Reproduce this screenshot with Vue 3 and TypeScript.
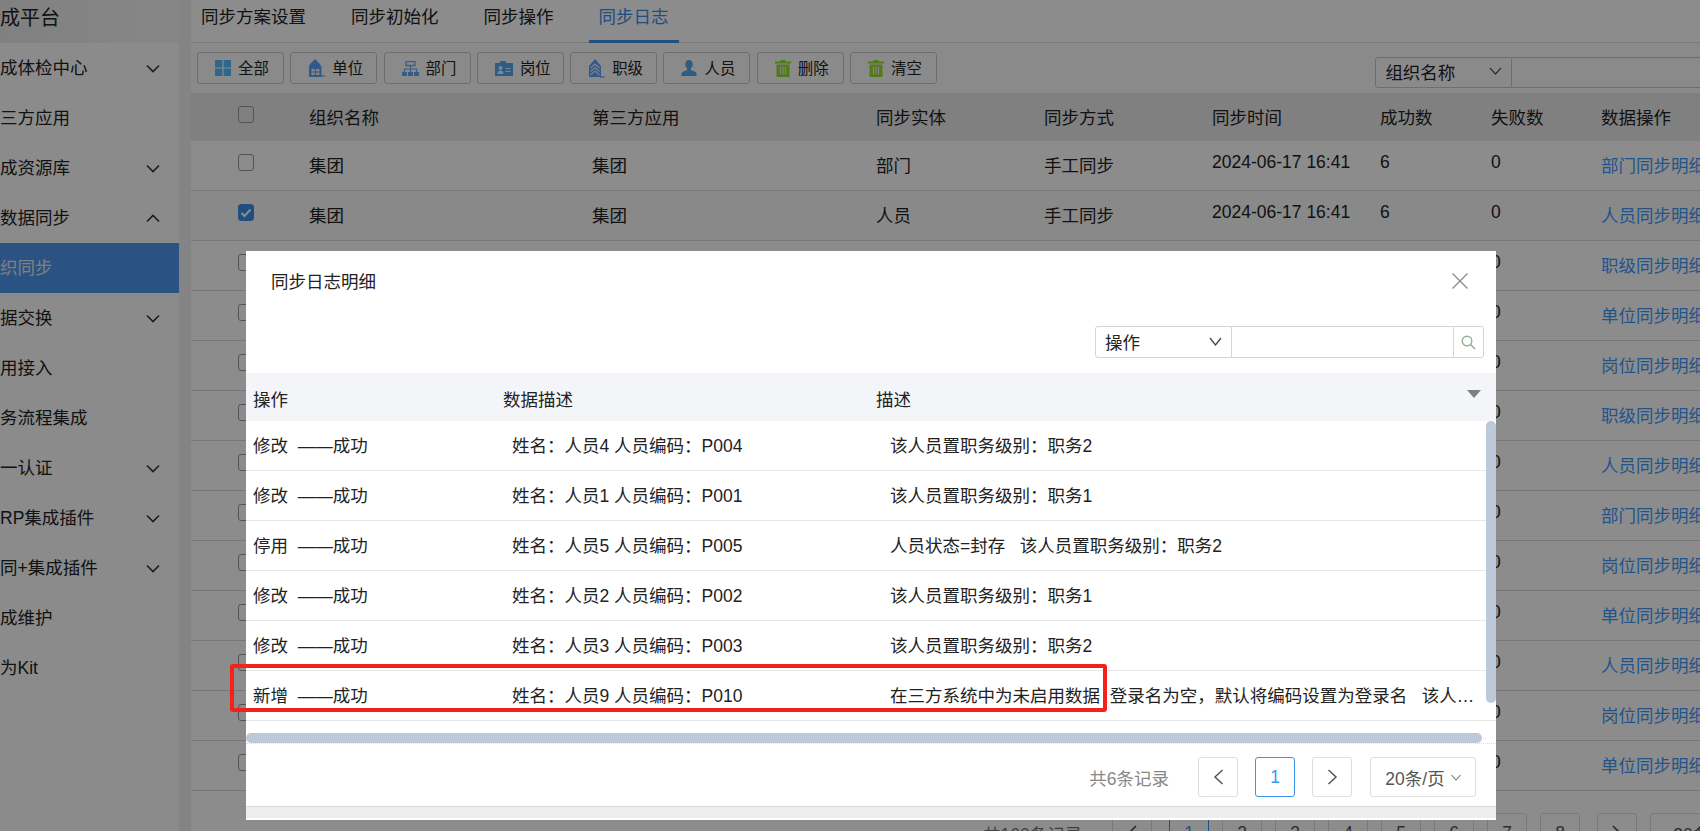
<script setup lang="ts">
const menu = [
  { label: "成体检中心", arrow: "down" },
  { label: "三方应用" },
  { label: "成资源库", arrow: "down" },
  { label: "数据同步", arrow: "up" },
  { label: "织同步", active: true },
  { label: "据交换", arrow: "down" },
  { label: "用接入" },
  { label: "务流程集成" },
  { label: "一认证", arrow: "down" },
  { label: "RP集成插件", arrow: "down" },
  { label: "同+集成插件", arrow: "down" },
  { label: "成维护" },
  { label: "为Kit" },
];

const tabs = ["同步方案设置", "同步初始化", "同步操作", "同步日志"];

const tools = [
  { label: "全部", icon: "grid" },
  { label: "单位", icon: "unit" },
  { label: "部门", icon: "org" },
  { label: "岗位", icon: "card" },
  { label: "职级", icon: "rank" },
  { label: "人员", icon: "user" },
  { label: "删除", icon: "trash" },
  { label: "清空", icon: "trash" },
];

const heads = ["组织名称", "第三方应用", "同步实体", "同步方式", "同步时间", "成功数", "失败数", "数据操作"];

const entities = ["部门", "人员", "职级", "单位", "岗位", "职级", "人员", "部门", "岗位", "单位", "人员", "岗位", "单位"];

const pages = ["1", "2", "3", "4", "5", "6", "7", "8"];

const details = [
  { op: "修改  ——成功", data: "姓名：人员4 人员编码：P004", desc: "该人员置职务级别：职务2" },
  { op: "修改  ——成功", data: "姓名：人员1 人员编码：P001", desc: "该人员置职务级别：职务1" },
  { op: "停用  ——成功", data: "姓名：人员5 人员编码：P005", desc: "人员状态=封存   该人员置职务级别：职务2" },
  { op: "修改  ——成功", data: "姓名：人员2 人员编码：P002", desc: "该人员置职务级别：职务1" },
  { op: "修改  ——成功", data: "姓名：人员3 人员编码：P003", desc: "该人员置职务级别：职务2" },
  {
    op: "新增  ——成功",
    data: "姓名：人员9 人员编码：P010",
    desc: "在三方系统中为未启用数据  登录名为空，默认将编码设置为登录名   该人员置职务级别：职务2",
  },
];
</script>

<template>
  <div class="page">
    <aside class="sidebar">
      <div class="brand">成平台</div>
      <ul class="menu">
        <li v-for="m in menu" :key="m.label" class="menu-item" :class="{ active: m.active }">
          <span>{{ m.label }}</span>
          <svg v-if="m.arrow" class="menu-arrow" width="14" height="9" viewBox="0 0 14 9">
            <path :d="m.arrow === 'down' ? 'M1 1.5 7 7.5 13 1.5' : 'M1 7.5 7 1.5 13 7.5'" fill="none" stroke="#333" stroke-width="1.6" />
          </svg>
        </li>
      </ul>
    </aside>

    <main class="main">
      <nav class="tabs">
        <a v-for="(t, i) in tabs" :key="t" class="tab" :class="{ current: i === 3 }">{{ t }}</a>
      </nav>

      <div class="toolbar">
        <button v-for="t in tools" :key="t.label" class="tool">
          <span class="ico">
            <svg v-if="t.icon === 'grid'" width="16" height="16" viewBox="0 0 16 16">
              <path d="M0 0h7.400v7.400H0zM8.600 0H16v7.400H8.600zM0 8.600h7.400V16H0zM8.600 8.600H16V16H8.600z" fill="#55bcff" />
            </svg>
            <svg v-else-if="t.icon === 'unit'" width="17" height="18" viewBox="0 0 17 18">
              <path d="M7 0 9 2 12 5 13.500 8V18H1V8L2 5 5 2z" fill="#5aa2ff" />
              <path d="M3.500 10h8v6h-8z" fill="#f4f4f4" />
              <path d="M7.500 10v6M3.500 13h8" stroke="#5aa2ff" stroke-width="1.200" />
              <path d="M13 17h4" stroke="#5aa2ff" stroke-width="1.200" />
            </svg>
            <svg v-else-if="t.icon === 'org'" width="17" height="15" viewBox="0 0 17 15">
              <path d="M4 .5h9v4H4z" fill="none" stroke="#6fa8f5" stroke-width="1.300" />
              <path d="M8.500 5v3M2.500 11V8h12v3M8.500 8v3" fill="none" stroke="#6fa8f5" stroke-width="1.200" />
              <path d="M0 11h5v4H0zM6 11h5v4H6zM12 11h5v4h-5z" fill="#66a4f5" />
            </svg>
            <svg v-else-if="t.icon === 'card'" width="18" height="15" viewBox="0 0 18 15">
              <path d="M0 2h5V0h6v2h7v13H0z" fill="#55aaf0" />
              <circle cx="5.500" cy="7" r="2" fill="#e8f2fb" />
              <path d="M2.500 13c0-2.500 1.500-3.400 3-3.400s3 .9 3 3.400z" fill="#e8f2fb" />
              <path d="M10.500 7.500h5M10.500 10.500h5" stroke="#e8f2fb" stroke-width="1.200" />
            </svg>
            <svg v-else-if="t.icon === 'rank'" width="17" height="19" viewBox="0 0 17 19">
              <path d="M7 0 13 7V18H1V7z" fill="#5aa2ff" />
              <path d="M2.500 9 7 5 11.500 9M2.500 12.500 7 8.500 11.500 12.500M2.500 16 7 12 11.500 16" fill="none" stroke="#e6effa" stroke-width="1.200" />
              <path d="M12 18h5" stroke="#5aa2ff" stroke-width="1.200" />
            </svg>
            <svg v-else-if="t.icon === 'user'" width="16" height="16" viewBox="0 0 16 16">
              <ellipse cx="8" cy="4.300" rx="3.700" ry="4.300" fill="#55aaf0" />
              <path d="M6 8h4v2.200c2.500.7 5 1.500 5.500 3.300V16H.5v-2.500C1 11.700 3.500 10.900 6 10.200z" fill="#55aaf0" />
            </svg>
            <svg v-else width="16" height="17" viewBox="0 0 16 17">
              <path d="M5.500 0h5v1.500H16V3.500H0V1.500h5.500z" fill="#96de30" />
              <path d="M1.500 4.500h13V17h-13z" fill="#96de30" />
              <path d="M5.500 6.500v8M8 6.500v8M10.500 6.500v8" stroke="#f2f2f2" stroke-width="1.100" />
            </svg>
          </span>
          <span class="tool-text">{{ t.label }}</span>
        </button>
        <div class="top-search">
          <div class="top-select">
            <span>组织名称</span>
            <svg width="13" height="8" viewBox="0 0 13 8"><path d="M1 1 6.500 7 12 1" fill="none" stroke="#555" stroke-width="1.200" /></svg>
          </div>
          <div class="top-input"></div>
        </div>
      </div>

      <table class="grid">
        <colgroup>
          <col style="width: 118px" /><col style="width: 283px" /><col style="width: 284px" /><col style="width: 168px" />
          <col style="width: 168px" /><col style="width: 168px" /><col style="width: 111px" /><col style="width: 110px" /><col style="width: 200px" />
        </colgroup>
        <thead>
          <tr>
            <th class="check-cell"><i class="check"></i></th>
            <th v-for="h in heads" :key="h">{{ h }}</th>
          </tr>
        </thead>
        <tbody>
          <tr v-for="(e, i) in entities" :key="i" :class="{ picked: i === 1 }">
            <td class="check-cell">
              <i class="check" :class="{ on: i === 1 }">
                <svg v-if="i === 1" width="12" height="10" viewBox="0 0 12 10"><path d="M1.500 5 4.500 8 10.500 1.500" fill="none" stroke="#fff" stroke-width="2" /></svg>
              </i>
            </td>
            <td>集团</td>
            <td>集团</td>
            <td>{{ e }}</td>
            <td>手工同步</td>
            <td class="num">2024-06-17 16:41</td>
            <td class="num">6</td>
            <td class="num">0</td>
            <td><a class="link">{{ e }}同步明细</a></td>
          </tr>
        </tbody>
      </table>

      <div class="pager under">
        <span class="total">共160条记录</span>
        <button class="pg first"><svg width="10" height="16" viewBox="0 0 10 16"><path d="M9 1 2 8 9 15" fill="none" stroke="#444" stroke-width="1.500" /></svg></button>
        <button v-for="p in pages" :key="p" class="pg" :class="{ on: p === '1' }">{{ p }}</button>
        <button class="pg last"><svg width="10" height="16" viewBox="0 0 10 16"><path d="M1 1 8 8 1 15" fill="none" stroke="#444" stroke-width="1.500" /></svg></button>
        <button class="pg size">20条/页</button>
      </div>
    </main>

    <div class="mask"></div>

    <section class="dialog">
      <header class="dialog-head">
        <span>同步日志明细</span>
        <svg width="16" height="16" viewBox="0 0 16 16"><path d="M.5.500 15.500 15.500M15.500.5.500 15.500" stroke="#8a8a8a" stroke-width="1.300" /></svg>
      </header>

      <div class="dialog-search">
        <div class="d-select">
          <span>操作</span>
          <svg width="13" height="9" viewBox="0 0 13 9"><path d="M1 1 6.500 8 12 1" fill="none" stroke="#444" stroke-width="1.300" /></svg>
        </div>
        <div class="d-input"></div>
        <div class="d-btn">
          <svg width="15" height="15" viewBox="0 0 15 15">
            <circle cx="6" cy="6" r="4.800" fill="none" stroke="#8fb39a" stroke-width="1.400" />
            <path d="M9.500 9.500 14 14" stroke="#8fb39a" stroke-width="1.600" />
          </svg>
        </div>
      </div>

      <div class="d-body">
        <table class="d-table">
          <colgroup>
            <col style="width: 250px" /><col style="width: 373px" /><col />
          </colgroup>
          <thead>
            <tr><th>操作</th><th>数据描述</th><th>描述</th></tr>
          </thead>
          <tbody>
            <tr v-for="d in details" :key="d.data">
              <td>{{ d.op }}</td>
              <td class="ind-a">{{ d.data }}</td>
              <td class="ind-b">{{ d.desc }}</td>
            </tr>
          </tbody>
        </table>
        <i class="sort"></i>
        <i class="v-bar"></i>
      </div>

      <div class="h-track"><i class="h-bar"></i></div>

      <div class="pager d-pager">
        <span class="total">共6条记录</span>
        <button class="pg"><svg width="11" height="16" viewBox="0 0 11 16"><path d="M9.500 1 2 8 9.500 15" fill="none" stroke="#555" stroke-width="1.500" /></svg></button>
        <button class="pg on">1</button>
        <button class="pg"><svg width="11" height="16" viewBox="0 0 11 16"><path d="M1.500 1 9 8 1.500 15" fill="none" stroke="#555" stroke-width="1.500" /></svg></button>
        <button class="pg size">
          <span>20条/页</span>
          <svg width="10" height="7" viewBox="0 0 10 7"><path d="M.5 1 5 6 9.500 1" fill="none" stroke="#777" stroke-width="1.100" /></svg>
        </button>
      </div>

      <div class="d-foot"></div>
    </section>

    <div class="mark"></div>
  </div>
</template>

<style>
html,
body {
  margin: 0;
  overflow: hidden;
}
</style>

<style scoped>
.page {
  position: relative;
  display: flex;
  width: 1700px;
  height: 831px;
  overflow: hidden;
  background: #fff;
  color: #222;
  font-family: "Liberation Sans", "Noto Sans CJK SC", sans-serif;
  font-size: 17.5px;
}

.sidebar {
  flex: 0 0 179px;
  margin-right: 12px;
  background: #fdfdfd;
  box-shadow: 12px 0 0 #f0f0f0;
}
.brand {
  height: 43px;
  line-height: 37px;
  font-size: 20px;
  background: linear-gradient(90deg, #eaeaea, #f6f6f6);
}
.menu {
  margin: 0;
  padding: 0;
  list-style: none;
}
.menu-item {
  display: flex;
  justify-content: space-between;
  align-items: center;
  box-sizing: border-box;
  height: 50px;
  padding: 0 19px 4px 0;
  white-space: nowrap;
}
.menu-item.active {
  background: #4d96ee;
  color: #e8e8e8;
}
.menu-arrow {
  margin-top: 5px;
}

.main {
  flex: 0 0 1509px;
  min-width: 0;
}

.tabs {
  display: flex;
  box-sizing: border-box;
  height: 43px;
  border-bottom: 1px solid #ddd;
}
.tab {
  box-sizing: border-box;
  height: 43px;
  margin-right: 25px;
  padding: 0 10px;
  line-height: 35px;
}
.tab.current {
  color: #3b8ee8;
  border-bottom: 3px solid #3b8ee8;
}

.toolbar {
  display: flex;
  box-sizing: border-box;
  height: 50px;
  padding: 9px 0 0 6px;
  gap: 6.3px;
  background: #fbfbfb;
}
.tool {
  display: flex;
  flex: 0 0 87px;
  align-items: center;
  gap: 7px;
  box-sizing: border-box;
  height: 32px;
  padding: 0 0 0 17px;
  border: 1px solid #c9c9c9;
  border-radius: 3px;
  background: #fcfcfc;
  color: #222;
  font: inherit;
  font-size: 15.4px;
}
.ico {
  display: flex;
  flex: 0 0 16px;
  justify-content: center;
}
.ico svg {
  flex: none;
}
.tool-text {
  padding-bottom: 3px;
}
.top-search {
  display: flex;
  flex: 0 0 auto;
  height: 31px;
  margin: 5px 0 0 432px;
}
.top-select {
  display: flex;
  justify-content: space-between;
  align-items: center;
  box-sizing: border-box;
  width: 137px;
  padding: 0 9px 3px 9px;
  border: 1px solid #c9c9c9;
  border-radius: 3px 0 0 3px;
}
.top-input {
  width: 300px;
  border: 1px solid #c9c9c9;
  border-left: 0;
}

.grid {
  width: 1510px;
  table-layout: fixed;
  border-collapse: separate;
  border-spacing: 0;
}
.grid th,
.grid td {
  box-sizing: border-box;
  height: 50px;
  padding: 0 0 2px;
  border-bottom: 1px solid #d9d9d9;
  font-weight: 400;
  text-align: left;
  white-space: nowrap;
  overflow: hidden;
}
.grid th {
  height: 48px;
  background: #e9e9e9;
  border-bottom: 0;
}
.grid .picked td {
  background: #fafafa;
}
.grid .num {
  padding-bottom: 6px;
}
.check-cell {
  padding-left: 47px !important;
  padding-bottom: 0 !important;
}
.check {
  display: inline-flex;
  justify-content: center;
  align-items: center;
  box-sizing: border-box;
  width: 16px;
  height: 17px;
  margin-bottom: 6px;
  border: 1px solid #999;
  border-radius: 3px;
  vertical-align: middle;
}
.check.on {
  background: #3d8eea;
  border-color: #3d8eea;
}
.link {
  color: #3f9aff;
}

.pager {
  display: flex;
  align-items: center;
}
.under {
  height: 40px;
  margin: 22px 0 0 792px;
  gap: 13px;
  white-space: nowrap;
}
.under .total {
  flex: 0 0 116px;
  color: #777;
}
.pg {
  display: flex;
  flex: 0 0 auto;
  justify-content: center;
  align-items: center;
  box-sizing: border-box;
  width: 40px;
  height: 40px;
  padding: 0;
  border: 1px solid #ddd;
  border-radius: 3px;
  background: #fff;
  color: #555;
  font: inherit;
}
.pg.on {
  border-color: #3d96ee;
  color: #3d96ee;
}
.first {
  margin-right: 4px;
}
.last {
  margin-left: 4px;
}
.size {
  gap: 6px;
  width: 106px;
}

.mask {
  position: absolute;
  inset: 0;
  background: rgba(0, 0, 0, 0.45);
}

.dialog {
  position: absolute;
  top: 251px;
  left: 246px;
  width: 1250px;
  height: 569px;
  overflow: hidden;
  background: #fff;
}
.dialog-head {
  display: flex;
  justify-content: space-between;
  align-items: center;
  box-sizing: border-box;
  height: 60px;
  padding: 0 28px 0 25px;
}
.dialog-head span {
  padding-bottom: 1px;
}
.dialog-search {
  display: flex;
  justify-content: flex-end;
  height: 32px;
  margin: 15px 12px 15px 0;
}
.d-select {
  display: flex;
  justify-content: space-between;
  align-items: center;
  box-sizing: border-box;
  width: 137px;
  padding: 0 9px 2px 9px;
  border: 1px solid #d4d4d4;
  border-radius: 3px 0 0 3px;
}
.d-input {
  width: 221px;
  border-top: 1px solid #d4d4d4;
  border-bottom: 1px solid #d4d4d4;
}
.d-btn {
  display: flex;
  justify-content: center;
  align-items: center;
  box-sizing: border-box;
  width: 31px;
  border: 1px solid #d4d4d4;
  border-radius: 0 3px 3px 0;
}

.d-body {
  position: relative;
  height: 348px;
}
.d-table {
  width: 100%;
  table-layout: fixed;
  border-collapse: separate;
  border-spacing: 0;
}
.d-table th,
.d-table td {
  box-sizing: border-box;
  padding: 0 8px 3px 7px;
  font-weight: 400;
  text-align: left;
  white-space: pre;
  overflow: hidden;
  text-overflow: ellipsis;
}
.d-table th {
  height: 48px;
  padding-top: 2px;
  padding-bottom: 0;
  background: #f4f5f9;
}
.d-table td {
  height: 50px;
  border-bottom: 1px solid #e6e6e6;
}
.d-table td.ind-a {
  padding-left: 16px;
}
.d-table td.ind-b {
  padding-left: 21px;
  padding-right: 20px;
}
.sort {
  position: absolute;
  top: 17px;
  right: 15px;
  width: 0;
  height: 0;
  border-style: solid;
  border-width: 8px 7px 0;
  border-color: #808080 transparent transparent;
}
.v-bar {
  position: absolute;
  top: 48px;
  right: 0;
  width: 10px;
  height: 282px;
  border-radius: 5px;
  background: #bdc8d9;
}

.h-track {
  box-sizing: border-box;
  height: 23px;
  padding-top: 12px;
  border-bottom: 1px dotted #ddd;
}
.h-bar {
  display: block;
  width: 1236px;
  height: 10px;
  border-radius: 5px;
  background: #bdc8d9;
}
.d-pager {
  justify-content: flex-end;
  height: 40px;
  margin-top: 13px;
  padding-right: 20px;
  gap: 17px;
}
.d-pager .total {
  margin-right: 12px;
  color: #888;
}
.d-pager .size {
  margin-left: 1px;
}
.d-foot {
  box-sizing: border-box;
  height: 12px;
  margin-top: 9px;
  border-top: 1px solid #d8d8d8;
  background: #eee;
}

.mark {
  position: absolute;
  top: 664px;
  left: 230px;
  width: 877px;
  height: 48px;
  box-sizing: border-box;
  border: 4px solid #f5201a;
  border-radius: 3px;
}
</style>
